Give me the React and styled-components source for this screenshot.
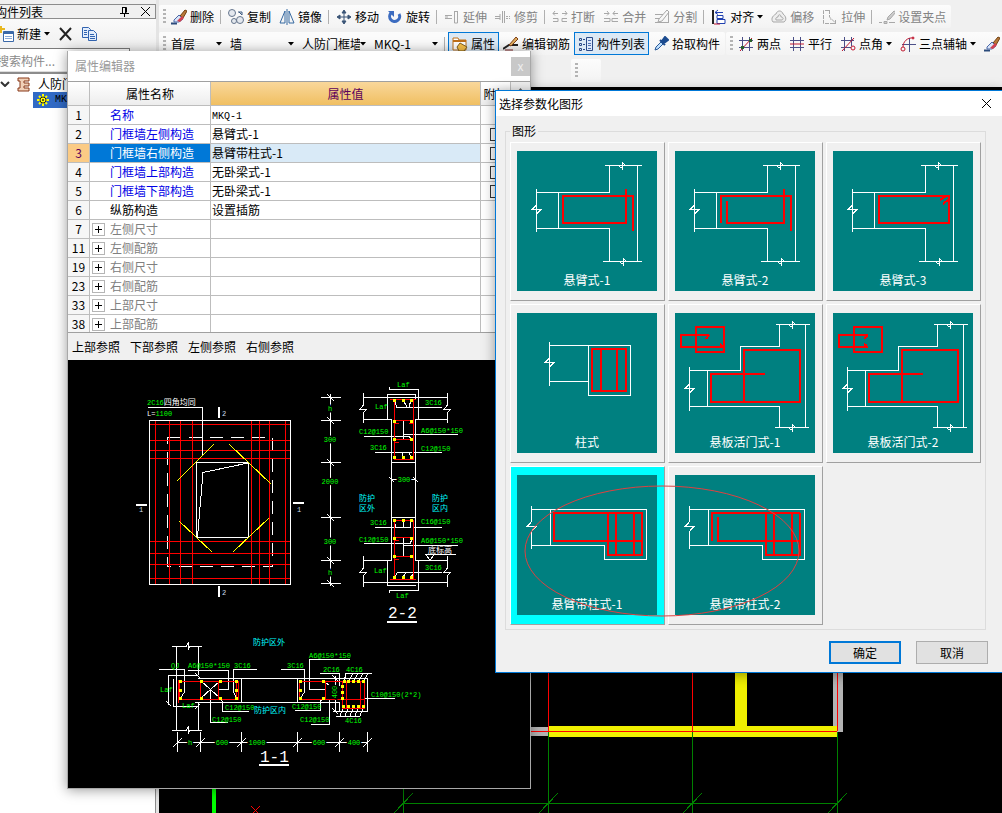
import { styled, createGlobalStyle } from "styled-components"

const GlobalStyle = createGlobalStyle`
    * {
        box-sizing: border-box;
    }
    body {
        margin: 0;
        font-family: "Noto Sans CJK SC", "Liberation Sans", sans-serif;
        font-size: 12px;
        line-height: 16px;
        color: #000;
        background: #f0f0f0;
    }
    button, input, select {
        font: inherit;
        color: inherit;
    }
    svg {
        display: block;
        flex: none;
    }
`

const Desktop = styled.div`
    position: relative;
    display: flex;
    height: 100vh;
    overflow: hidden;
`

/* ---------- left list ---------- */
const Sidebar = styled.aside`
    flex: none;
    width: 159px;
    display: flex;
    flex-direction: column;
    padding-top: 4px;
    border-right: 3px solid #e4e4e4;
    background: #f0f0f0;
`
const SideHeader = styled.header`
    display: flex;
    align-items: center;
    gap: 10px;
    height: 15px;
    margin-left: -8px;
    padding: 0 4px 0 2px;
    border: 1px solid #8c8c8c;
`
const SideTitle = styled.h2`
    flex: 1;
    margin: 0;
    font-size: 12px;
    font-weight: 400;
    line-height: 12px;
`
const FlatButton = styled.button`
    display: flex;
    align-items: center;
    gap: 3px;
    flex: none;
    padding: 0;
    border: 0;
    background: none;
    white-space: nowrap;
`
const SideTools = styled.div`
    display: flex;
    align-items: center;
    gap: 8px;
    height: 29px;
    margin-left: -2px;
    background: linear-gradient(#fafafa, #f0f0f0);
`
const Search = styled.input`
    width: 138px;
    height: 24px;
    margin-left: -8px;
    padding: 0 4px;
    border: 1px solid #7a7a7a;
    border-bottom-color: #ddd;
    background: #fff;
    &::placeholder {
        color: #8a8a8a;
        opacity: 1;
    }
`
const Tree = styled.ul`
    flex: 1;
    margin: 0;
    padding: 2px 0 0;
    list-style: none;
    border-top: 2px solid #8c8c8c;
    border-right: 1px solid #8c8c8c;
    background: #fff;
`
const TreeItem = styled.li`
    display: flex;
    align-items: center;
    gap: 6px;
    height: 16px;
    margin-left: ${props => props.$selected ? "33px" : "0"};
    padding-left: ${props => props.$selected ? "4px" : "0"};
    background: ${props => props.$selected ? "#316ac5" : "none"};
    white-space: nowrap;
`

/* ---------- toolbars ---------- */
const Main = styled.main`
    flex: 1;
    min-width: 0;
    display: flex;
    flex-direction: column;
`
const Ribbon = styled.div`
    display: flex;
    flex-direction: column;
    gap: 4px;
    height: 87px;
    padding-top: 5px;
    overflow: hidden;
    background: #f0f0f0;
`
const RibbonRow = styled.div`
    display: flex;
    flex: none;
    gap: 1px;
    height: 23px;
    padding-left: ${props => props.$indent || 0}px;
`
const Group = styled.div`
    display: flex;
    align-items: center;
    flex: none;
    padding: 0 1px 0 4px;
    min-width: 30px;
    border-radius: 2px;
    background: linear-gradient(#fcfcfc, #f3f3f3);
`
const Grip = styled.i`
    width: 3px;
    height: 15px;
    margin-right: 1px;
    background: repeating-linear-gradient(#b4b4b4 0 2px, transparent 2px 4px);
`
const Divider = styled.i`
    width: 1px;
    height: 14px;
    margin: 0 3px 0 2px;
    background: #b0b0b0;
`
const Tool = styled.button`
    display: flex;
    align-items: center;
    gap: 3px;
    flex: none;
    height: 23px;
    padding: 0 3px;
    border: 1px solid ${props => props.$on ? "#0078d7" : "transparent"};
    background: ${props => props.$on ? "#dce9f5" : "none"};
    color: ${props => props.disabled ? "#838383" : "#000"};
    white-space: nowrap;
`
const Combo = styled.label`
    display: flex;
    align-items: center;
    width: ${props => props.$width}px;
    height: 22px;
    padding: 0 4px;
    background: #fbfbfb;
`
const ComboSelect = styled.select`
    flex: 1;
    min-width: 0;
    padding: 0;
    border: 0;
    appearance: none;
    background: none;
`
const Canvas = styled.div`
    flex: 1;
    min-height: 0;
    background: #000;
    svg {
        width: 100%;
        height: 100%;
    }
`

/* ---------- property window ---------- */
const PropWindow = styled.section`
    position: absolute;
    left: 67px;
    top: 51px;
    width: 464px;
    display: flex;
    flex-direction: column;
    border: 1px solid #a8a8a8;
    border-top: 0;
    background: #f0f0f0;
    box-shadow: 0 1px 12px rgba(0, 0, 0, .4);
`
const PropTitle = styled.header`
    display: flex;
    align-items: center;
    justify-content: space-between;
    height: 31px;
    padding-left: 7px;
    border-bottom: 1px solid #a0a0a0;
    background: #fff;
    color: #999;
`
const PropClose = styled.button`
    width: 19px;
    height: 19px;
    padding: 0;
    border: 0;
    background: #c8c8c8;
    color: #eee;
    line-height: 14px;
`
const TableArea = styled.div`
    display: flex;
    height: 251px;
    overflow: hidden;
    border-bottom: 1px solid #a0a0a0;
`
const PropTable = styled.table`
    flex: 1;
    table-layout: fixed;
    border-collapse: separate;
    border-spacing: 0;
    background: #fff;
    th, td {
        height: 19px;
        padding: 0;
        border: solid #bdbdbd;
        border-width: 0 1px 1px 0;
        line-height: 14px;
        font-weight: 400;
        white-space: nowrap;
        overflow: hidden;
    }
    thead th {
        height: 24px;
        background: linear-gradient(#fff, #ededed);
    }
`
const ValueHead = styled.th`
    && {
        background: linear-gradient(#f9d79b, #f0bf61);
        color: #5b005b;
    }
`
const IndexCell = styled.th`
    background: ${props => props.$active ? "#fbcb85" : "#f6f6f6"};
    color: ${props => props.$active ? "#5b005b" : "#000"};
`
const NameCell = styled.td`
    background: ${props => props.$active ? "#0078d7" : "#fff"};
    color: ${props => props.$active ? "#fff" : props.$color};
`
const NameInner = styled.div`
    display: flex;
    align-items: center;
    gap: 5px;
    padding-left: ${props => props.$open ? 2 : 20}px;
`
const Expander = styled.button`
    display: grid;
    place-items: center;
    width: 13px;
    height: 13px;
    padding: 0;
    border: 1px solid #b5b5b5;
    background: #fff;
`
const ValueCell = styled.td`
    && {
        padding-left: 1px;
    }
    background: ${props => props.$active ? "#d9eaf7" : "#fff"};
`
const ExtraCell = styled.td`
    && {
        padding-left: 9px;
    }
`
const Check = styled.input`
    display: block;
    width: 13px;
    height: 13px;
    margin: 0;
    appearance: none;
    border: 1px solid #333;
    background: #fff;
`
const Mono = styled.span`
    font-family: "Liberation Mono", monospace;
    font-size: 10px;
`
const ScrollTrack = styled.div`
    width: 19px;
    padding-top: 6px;
    background: #f0f0f0;
    svg {
        margin: 0 auto;
    }
`
const RefBar = styled.nav`
    display: flex;
    align-items: center;
    gap: 10px;
    height: 27px;
    padding: 0 4px;
`
const Sheet = styled.div`
    height: 428px;
    padding-left: 1px;
    background: #000;
    font-family: "Liberation Mono", "Noto Sans CJK SC", monospace;
`

/* ---------- dialog ---------- */
const Dialog = styled.section`
    position: absolute;
    left: 495px;
    top: 90px;
    width: 508px;
    border: 1px solid #0078d7;
    background: #f0f0f0;
    box-shadow: 0 2px 12px rgba(0, 0, 0, .4);
`
const DialogTitle = styled.header`
    display: flex;
    align-items: center;
    justify-content: space-between;
    height: 25px;
    padding: 0 10px 0 3px;
    background: #fff;
`
const Shapes = styled.fieldset`
    margin: 7px 16px 0 9px;
    padding: 3px 4px 4px;
    border: 1px solid #dcdcdc;
`
const Legend = styled.legend`
    padding: 0 2px;
`
const ShapeGrid = styled.div`
    display: grid;
    grid-template-columns: repeat(3, 155px);
    gap: 3px;
`
const ShapeButton = styled.button`
    height: 159px;
    padding: 0 7px 1px 6px;
    border: 1px solid;
    border-color: #fff #a0a0a0 #a0a0a0 #fff;
    background: ${props => props.$selected ? "#00ffff" : "#f0f0f0"};
`
const ShapeFace = styled.span`
    display: flex;
    flex-direction: column;
    width: 140px;
    height: 140px;
    background: #008080;
    color: #fff;
    text-align: center;
`
const Actions = styled.footer`
    display: flex;
    justify-content: flex-end;
    gap: 15px;
    padding: 11px 14px 8px;
`
const ActionButton = styled.button`
    width: 72px;
    height: 23px;
    padding: 0;
    border: ${props => props.$main ? "2px solid #0078d7" : "1px solid #adadad"};
    background: #e1e1e1;
    line-height: 16px;
`
const Markup = styled.svg`
    position: absolute;
    left: 524px;
    top: 485px;
    pointer-events: none;
`

const Caret = () => (
    <svg width="6" height="4"><path d="M0 0h6l-3 3.5z" fill="#000" /></svg>
)

const B = "#3d5a80"
const G = "#a8a8a8"
const R = "#c01830"

const icons = {
    erase: <><path d="M0 14.5h6" stroke="#2a4a7a" strokeWidth="2" /><path d="M9 7l5-6 2 1-4 7z" fill="#b87838" stroke="#704010" /><path d="M3 11l5-5 4 4-4 3H3z" fill="#d8e4f8" stroke="#4a68a8" /><path d="M6 12l5-5 2 2-4 4z" fill="#d04050" /></>,
    copy: <><g fill="#e4e8ee" stroke="#65758c"><circle cx="4" cy="4" r="3.5" /><circle cx="6" cy="12" r="2.5" /><circle cx="12" cy="11" r="3.5" /></g><path d="M10 3h4v3M11 3l3 3" stroke={B} /></>,
    mirror: <path d="M6 2v12H1zM10 2v12h5zM8 0v16" stroke="#3568a0" fill="none" />,
    move: <path d="M8 2v12M2 8h12M8 1L6 4h4zM8 15l-2-3h4zM1 8l3-2v4zM15 8l-3-2v4z" stroke="#3b5577" fill="#3b5577" />,
    rotate: <><path d="M4 4a5 5 0 1 0 8 1" stroke="#3c6cc0" strokeWidth="3" /><path d="M1 2h6v6z" fill="#3c6cc0" /></>,
    extend: <path d="M1 6.5h7M1 9.5h7M1 8h3M13.500 2v12M10.500 2v12h3M10 2.500h4" stroke={G} />,
    trim: <path d="M0 7.500h5M0 9.500h5M11 7.500h2M14 7.500h1M11 9.500h2M14 9.500h1M7.500 2v12M9.500 2v12M5 5v6" stroke={G} />,
    split: <path d="M1 4.500h5M10 4.500h5M3 2L1 4.500l2 2M13 2l2 2.500-2 2M1 9.500h5v3H1M15 9.500h-5v3h5" stroke={G} />,
    merge: <path d="M1 4.500h5M10 4.500h5M4 2l2 2.500-2 2M12 2l-2 2.500 2 2M1 9.500h6v3H1M15 9.500H9v3h6" stroke={G} />,
    cut: <path d="M1 5.500h8M1 9.500h4M1 13.500h14M14.500 2v11M13 1L5 10l-1 3 4-1 7-9z" stroke={G} />,
    align: <><path d="M2 1v14" stroke="#222" strokeWidth="2" /><path d="M6 6.500h6v3H6zM6 10.500h8v4H6z" fill="#fff" stroke="#2040b0" /><path d="M4 3.500h8M7 1L4 3.500l3 2" stroke="#2040b0" /><path d="M3 15h6" stroke={R} /></>,
    offset: <path d="M2 13c-3-4 1-7 3-8 1-4 6-4 7 0 3 2 4 6 1 8zM5 11c-1-2 1-3 2-3 0-3 3-3 3 0 2 0 3 2 1 3z" stroke={G} fill="#eee" />,
    stretch: <path d="M7 1.500H1.500v13H10M7.500 1v7l6 6v-3M8 10h1M10 14.500h4" stroke={G} strokeDasharray="4 1" />,
    grip: <path d="M0 13.500h3M5 12.500h3v2H5zM10 13.500h6M15 2L9 8l-1 3 3-1 6-7z" stroke={G} fill="#ccc" />,
    props: <><path d="M1 2h5l1 2h7v10H1z" fill="#fff" stroke="#c07018" /><path d="M1 5h13" stroke="#c07018" strokeWidth="2" /><path d="M5 11l3-4 7 4-3 4H7z" fill="#f8c048" stroke="#806020" /></>,
    bars: <><path d="M0 13l6-4h9" stroke="#222" strokeWidth="2" /><path d="M6 9l7-8 2 2-7 7z" fill="#e0b060" stroke="#804018" /><path d="M2 14h8" stroke="#802020" /></>,
    list: <><path d="M1.500 2.500h2v2h-2zM1.500 7.500h2v2h-2zM1.500 12.500h2v2h-2z" stroke="#2a4a88" /><path d="M5 3.500h2M5 8.500h2M5 13.500h2" stroke="#2a4a88" /><path d="M8.500 1.500h6v13h-6z" fill="#dce8fa" stroke="#2a4a88" /><path d="M10 4.500h3M10 7.500h3M10 9.500h3M10 12.500h3" stroke="#5070b0" /></>,
    pick: <><path d="M2 14l1-3 5-5 2 2-5 5z" fill="#bfe0ff" stroke="#2a5a98" /><path d="M7 4l5 5M9 5l3-4 3 3-4 3z" fill="#1c4c90" stroke="#1c4c90" strokeWidth="2" /></>,
    twoPoint: <><path d="M4.500 1v14M11.500 1v14M1 4.500h14M1 11.500h14" stroke="#4c5088" /><path d="M2 15L14 2" stroke={R} /><path d="M11 3h3v3h-3zM3 10h3v3H3z" fill="#286028" /></>,
    parallel: <><path d="M4.500 1v14M11.500 1v14M1 4.500h14M1 11.500h14" stroke="#4c5088" /><path d="M1 8h14" stroke={R} /></>,
    angle: <><path d="M4.500 1v14M11.500 1v9M1 4.500h13M1 11.500h10" stroke="#4c5088" /><path d="M2 15L14 2" stroke={R} /><circle cx="13" cy="12" r="2" stroke={R} /></>,
    threePoint: <><path d="M9.500 2v14M2 8.500h14" stroke="#4c5088" /><path d="M14 2C7 1 3 6 3 11" stroke={R} /><circle cx="3" cy="13" r="2" stroke={R} /><circle cx="13" cy="2" r="1" stroke={R} /></>,
    add: <><path d="M5.500 5.500h10v10h-10z" fill="#fff" stroke="#3a68a8" /><path d="M5 7h11" stroke="#3a68a8" strokeWidth="2" /><path d="M7 10.500h7M7 12.500h7" stroke="#88a8d8" /><path d="M3 0v7M0 3h7" stroke="#e8b820" strokeWidth="2" /></>,
    remove: <path d="M2 2l11 12M13 2L2 14" stroke="#222" strokeWidth="2" />,
    pages: <g fill="#e4eefc" stroke="#3264b0"><path d="M.5 1.500h6l2 2v8h-8z" /><path d="M6.500 4.500h5l3 3v7h-8z" /><path d="M8 8.500h4M8 10.500h5M8 12.500h5M2 4.500h3M2 6.500h3M2 8.500h3" /></g>,
    wall: <path d="M2 2h11v3H8v2h5v3H8v2h5v3H2v-3h2V5H2z" fill="#f0d0b8" stroke="#883818" />,
    gear: <><path d="M6 0v12M0 6h12M2 2l8 8M10 2l-8 8" stroke="#ff0" strokeWidth="2" /><circle cx="6" cy="6" r="3" fill="#ff0" stroke="#222" /><circle cx="6" cy="6" r="1" fill="#222" /></>,
    pin: <path d="M3.500 1.500h4v5M3.500 1v6M6.500 1v6M1 7.500h9M5.500 7v4" stroke="#000" />,
    close: <path d="M1 1l9 9M10 1l-9 9" stroke="#000" />,
}

const Icon = ({ name, size = 16 }) => (
    <svg width={size} height={size} fill="none">{icons[name]}</svg>
)

const editTools = [
    ["erase", "删除"], null,
    ["copy", "复制"], ["mirror", "镜像"], null,
    ["move", "移动"], ["rotate", "旋转"], null,
    ["extend", "延伸", true], ["trim", "修剪", true], null,
    ["split", "打断", true], ["merge", "合并", true], ["cut", "分割", true], null,
    ["align", "对齐", false, true], ["offset", "偏移", true], ["stretch", "拉伸", true], null,
    ["grip", "设置夹点", true],
]

const combos = [
    ["楼层", "首层", 59],
    ["类别", "墙", 72],
    ["构件类型", "人防门框墙", 72],
    ["构件", "MKQ-1", 72],
]

const Toolbars = () => (
    <Ribbon>
        <RibbonRow>
            <Group>
                <Grip />
                {editTools.map((t, i) => t ? (
                    <Tool key={i} disabled={t[2]}>
                        <Icon name={t[0]} />{t[1]}{t[3] && <Caret />}
                    </Tool>
                ) : <Divider key={i} />)}
            </Group>
        </RibbonRow>
        <RibbonRow>
            <Group>
                <Grip />
                {combos.map(([label, value, width]) => (
                    <Combo key={label} $width={width}>
                        <ComboSelect aria-label={label}>
                            <option>{value}</option>
                        </ComboSelect>
                        <Caret />
                    </Combo>
                ))}
                <Divider />
                <Tool $on><Icon name="props" />属性</Tool>
                <Tool><Icon name="bars" />编辑钢筋</Tool>
                <Tool $on><Icon name="list" />构件列表</Tool>
                <Tool><Icon name="pick" />拾取构件</Tool>
            </Group>
            <Group>
                <Grip />
                <Tool><Icon name="twoPoint" />两点</Tool>
                <Tool><Icon name="parallel" />平行</Tool>
                <Tool><Icon name="angle" />点角 <Caret /></Tool>
                <Tool><Icon name="threePoint" />三点辅轴 <Caret /></Tool>
                <Tool aria-label="删除辅轴"><Icon name="erase" /></Tool>
            </Group>
        </RibbonRow>
        <RibbonRow $indent={412}>
            <Group><Grip /></Group>
        </RibbonRow>
    </Ribbon>
)

const ModelView = () => (
    <Canvas>
        <svg shapeRendering="crispEdges" fill="none">
            <g transform="translate(-159 -87)">
                <path d="M833 600h10v132h-10zM531 727h17v9h-17z" fill="#b4b4b4" />
                <path d="M735 600h12v126h-12zM548 726h289v11H548z" fill="#f0f000" />
                <path d="M531 731.5h306M548.5 600v131M692.5 600v131M837.5 600v131" stroke="#f00" />
                <path d="M548.5 732v81M692.5 732v81M837.5 732v81M403.5 780v33M403 803.5h435" stroke="#008000" />
                <path d="M394 813l19-20M539 813l19-20M683 813l19-20M828 813l19-20" stroke="#008000" />
                <path d="M212 780h4v33h-4z" fill="#0f0" />
                <path d="M251 806l9 9M260 806l-9 9" stroke="#f00" />
            </g>
        </svg>
    </Canvas>
)

const rows = [
    [1, "名称", <Mono>MKQ-1</Mono>, "#0000e6"],
    [2, "门框墙左侧构造", "悬臂式-1", "#0000e6", true],
    [3, "门框墙右侧构造", "悬臂带柱式-1", "#0000e6", true],
    [4, "门框墙上部构造", "无卧梁式-1", "#0000e6", true],
    [5, "门框墙下部构造", "无卧梁式-1", "#0000e6", true],
    [6, "纵筋构造", "设置插筋", "#000"],
    [7, "左侧尺寸"],
    [11, "左侧配筋"],
    [19, "右侧尺寸"],
    [23, "右侧配筋"],
    [33, "上部尺寸"],
    [38, "上部配筋"],
]

const Properties = () => (
    <TableArea>
        <PropTable>
            <colgroup>
                <col width="22" />
                <col width="121" />
                <col width="270" />
                <col width="30" />
            </colgroup>
            <thead>
                <tr>
                    <th />
                    <th>属性名称</th>
                    <ValueHead>属性值</ValueHead>
                    <th>附加</th>
                </tr>
            </thead>
            <tbody>
                {rows.map(([no, name, value, color, check]) => (
                    <tr key={no}>
                        <IndexCell $active={no === 3}>{no}</IndexCell>
                        <NameCell $active={no === 3} $color={color || "#808080"}>
                            <NameInner $open={!color}>
                                {!color && (
                                    <Expander aria-label={"展开" + name}>
                                        <svg width="7" height="7"><path d="M0 3.5h7M3.5 0v7" stroke="#000" /></svg>
                                    </Expander>
                                )}
                                {name}
                            </NameInner>
                        </NameCell>
                        <ValueCell $active={no === 3}>{value}</ValueCell>
                        <ExtraCell>{check && <Check type="checkbox" aria-label={name + "附加"} />}</ExtraCell>
                    </tr>
                ))}
            </tbody>
        </PropTable>
        <ScrollTrack>
            <svg width="7" height="4"><path d="M0 4l3.5-4L7 4z" fill="#606060" /></svg>
        </ScrollTrack>
    </TableArea>
)

/* ---------- reinforcement sheet ---------- */
const T = ({ x, y, c = "#00ff00", s = 7, mid, children }) => (
    <text x={x} y={y} fill={c} stroke={mid ? "#000" : "none"} strokeWidth={mid ? 3 : 0}
        paintOrder="stroke" fontSize={s} textAnchor={mid ? "middle" : "start"}>{children}</text>
)

const Dots = ({ at }) => at.map(([x, y]) => (
    <rect key={x + "-" + y} x={x - 1} y={y - 1} width="3" height="3" fill="#ff0" />
))

const Elevation = () => (
    <g transform="translate(61 15)">
        <rect x="37.5" y="62.5" width="105" height="129" stroke="#fff" strokeDasharray="13 8" />
        <path stroke="#f00" d="M25.5 46v163M39.5 46v163M50.5 46v163M62.5 46v163M121.5 46v163M129.5 46v163M139.5 46v163M155.5 46v163M20 49.5h141M20 65.5h141M20 75.5h141M20 83.5h141M20 166.5h141M20 178.5h141M20 189.5h141M20 203.5h141" />
        <path stroke="#fff" d="M19.5 45.5h141v164h-141zM66.5 87.5h52v75h-52zM118 88L73 97.5 67.5 162M18 32.5h54.5V80" />
        <path stroke="#ff0" d="M47 106l37-37M99 69l42 40M49 146l33 31M103 177l36-34" />
        <path stroke="#fff" strokeWidth="2" d="M89 32v11M89 211v11M6 130h11M163 128h11" />
        <T x="17" y="30">2C16<tspan fill="#fff" fontSize="8">四角均同</tspan></T>
        <T x="17" y="41"><tspan fill="#fff">L=</tspan>1100</T>
        <T x="92" y="41" c="#cde">2</T>
        <T x="92" y="220" c="#cde">2</T>
        <T x="9" y="137" c="#cde">1</T>
        <T x="167" y="137" c="#cde">1</T>
    </g>
)

const SectionTwo = () => (
    <g transform="translate(241 15)">
        <path stroke="#fff" d="M20.5 19v192M11 22.5h20M11 45.5h20M11 87.5h20M11 142.5h20M11 185.5h20M11 208.5h20M17 19l7 7M17 42l7 7M17 84l7 7M17 139l7 7M17 182l7 7M17 205l7 7" />
        <path stroke="#fff" d="M53 22.5h85M53 44.5h29M106 44.5h32M53.5 18v12l-3 4h6l-3 4v10M137.5 18v12l-3 4h6l-3 4v10M81.5 44v142M105.5 44v142M82 87.5h24M82 142.5h24M53 185.5h29M106 185.5h32M53 207.5h85M53.5 181v12l-3 4h6l-3 4v11M137.5 181v12l-3 4h6l-3 4v11" />
        <path stroke="#fff" d="M79.5 12v2.5h29v30M77.5 44.5v-25h28v4M77.5 185v25.5h28M79.5 218v-2.5h29v-30M82 104.5h24M79 102l5 5M103 102l5 5" />
        <path stroke="#fff" d="M84 25l3 7.500h45M93 25l4 7M101 25l-2 7M54 61.500h45l3 3M93.5 45v20M93 59.500h55M65 77.500h37M84 82v-4M93 82l-1-4M101 82l-2-4M103 77.500h29M65 152.500h36M84 145l2 7M93 145v7M101 145l-1 7M103 152.500h29M54 168.500h46l2-4M93.500 163v18M93 170.500h55M87 197.500h45M85 202l2-4M93 202l3-4M101 202l3-4M115 179.500h31M116 180l4 5 4-5" />
        <path stroke="#f00" d="M80 24.5h26M84.5 24v61M103.5 24v61M84 84.5h20M84 45.5h20M84 64.5h20M84.5 48h4M99 48h4M84.5 67h4M84.5 145v60M103.5 145v60M84 145.5h20M84 162.5h20M84 181.5h20M80 204.5h26M84.5 165h4M84.5 184h4" />
        <Dots at={[[84, 25], [93, 25], [101, 25], [84, 46], [101, 46], [84, 64], [101, 64], [84, 82], [93, 82], [101, 82], [84, 145], [93, 145], [101, 145], [84, 163], [101, 163], [84, 181], [101, 181], [84, 202], [93, 202], [101, 202]]} />
        <T x="20" y="36" mid>h</T>
        <T x="20" y="67" mid>300</T>
        <T x="20" y="109" mid>2000</T>
        <T x="20" y="169" mid>300</T>
        <T x="20" y="200" mid>h</T>
        <T x="94" y="107" mid>300</T>
        <T x="87" y="12">Laf</T>
        <T x="65" y="34">Laf</T>
        <T x="115" y="30">3C16</T>
        <T x="49" y="59">C12@150</T>
        <T x="111" y="58">A6@150*150</T>
        <T x="60" y="75">3C16</T>
        <T x="111" y="76">C12@150</T>
        <T x="60" y="150">3C16</T>
        <T x="111" y="149">C16@150</T>
        <T x="49" y="167">C12@150</T>
        <T x="111" y="168">A6@150*150</T>
        <T x="118" y="178" c="#fff" s={8}>底标高</T>
        <T x="64" y="198">Laf</T>
        <T x="115" y="195">3C16</T>
        <T x="86" y="223">Laf</T>
        <T x="49" y="126" c="#0ff" s={8}>防护</T>
        <T x="49" y="136" c="#0ff" s={8}>区外</T>
        <T x="122" y="126" c="#0ff" s={8}>防护</T>
        <T x="122" y="136" c="#0ff" s={8}>区内</T>
        <T x="78" y="243" c="#fff" s={16}>2-2</T>
        <path stroke="#fff" strokeWidth="2" d="M77 247h30" />
    </g>
)

const SectionOne = () => (
    <g transform="translate(81 270)">
        <path stroke="#fff" d="M26.5 16v85M48.500 16v29M48.500 72v29M22 16.500h14l2-3v6l2-3h12M22 100.500h14l2-3v6l2-3h12M45 43l5 5M45 79l5-5" />
        <path stroke="#fff" d="M48 48.500h169.500v33H183M45 72.500h144.500v9M91.500 48v24M147.500 48v24M18.500 75V45.500H48M16 71l5 5M48 76.500H23.500v-28M51 51l19 17M70 51L51 68M185.500 46v36M182 45l6 6M182 78l6 6" />
        <path stroke="#fff" d="M9 39.500h25.500V62l-4 6M38 40.500h40.500v19H69M107 39.500H83.500V62l3 6M131 39.500h23.500V62l-4 6M200 29.500h-40.500v30H175M170 43.500h19.500V56M222 43.500h-26l-2 8M203 43l-4 8M208 43l-4 8M213 43l-4 8M218 43l-4 8M245 68.500h-30M186 86.500h24M193 78l-3 8M198 78l-3 8M203 78l-3 8M208 78l-3 8M213 78l-3 8M70 68l2.500 4v9.500H99M60.500 60v32.500H78M145 80.500h25.500V71l3-3M161 94.500h18.500V70M173 51l6 4" />
        <path stroke="#f00" d="M29.500 51.500h59v18h-59zM28.500 50v23M50.500 51v18M68.500 51v18M86.500 51v18M149.500 69.500V51.500h65.500M149 69.500h66M175.500 51v18M192.500 51.500h22v27h-22zM196.500 51v27M210.500 51v27" />
        <Dots at={[[30, 51], [30, 60], [30, 68], [51, 51], [51, 68], [70, 51], [70, 68], [86, 51], [86, 60], [86, 68], [150, 51], [150, 60], [150, 68], [173, 51], [173, 68], [192, 56], [192, 62], [192, 68], [194, 51], [198, 51], [203, 51], [208, 51], [213, 51], [193, 76], [198, 76], [203, 76], [208, 76], [213, 76]]} />
        <path stroke="#fff" d="M27 112.500h191M27.500 102v20M50.500 102v20M91.500 102v20M147.500 102v20M189.500 102v20M217.500 102v20M23 117l9-9M46 117l9-9M87 117l9-9M143 117l9-9M185 117l9-9M213 117l9-9" />
        <T x="40" y="115" mid>h</T>
        <T x="72" y="115" mid>600</T>
        <T x="107" y="115" mid>1000</T>
        <T x="169" y="115" mid>600</T>
        <T x="204" y="115" mid>400</T>
        <T x="103" y="15" c="#0ff" s={8}>防护区外</T>
        <T x="104" y="83" c="#0ff" s={8}>防护区内</T>
        <T x="21" y="38">QJ</T>
        <T x="38" y="38">A6@150*150</T>
        <T x="84" y="38">3C16</T>
        <T x="137" y="38">3C16</T>
        <T x="159" y="28">A6@150*150</T>
        <T x="173" y="42">2C16</T>
        <T x="196" y="42">4C16</T>
        <T x="221" y="67">C10@150(2*2)</T>
        <T x="195" y="93">4C16</T>
        <T x="75" y="80">C12@150</T>
        <T x="62" y="92">C12@150</T>
        <T x="142" y="79">C12@150</T>
        <T x="150" y="92">C12@150</T>
        <T x="10" y="62">Laf</T>
        <T x="32" y="78">Laf</T>
        <g transform="translate(187 62) rotate(-90)"><T x="0" y="0" mid>400</T></g>
        <T x="110" y="132" c="#fff" s={16}>1-1</T>
        <path stroke="#fff" strokeWidth="2" d="M109 135h30" />
    </g>
)

/* ---------- shape thumbnails ---------- */
const sideBreak = (x, y) => `M${x - 1} ${y - 4}l-4 4h9l-4 4`
const topBreak = (x, y) => `M${x - 3} ${y + 1}l3 2v-6l3 3M${x} ${y - 4}v8`

const wallT = "M19.5 38v43M19.5 41.5h73v-27M19.5 77.5h73v33M41.5 41.5v36M88 14.5h37M86 110.5h39M120.5 14.5v96" + sideBreak(20, 58.5) + topBreak(105.5, 14.5) + topBreak(106.5, 110.5)
const wallStep = "M14.5 54v44M14.5 57.5h51v-24h39v-22M14.5 93.5h90v21M32.5 57.5v36M101 11.5h34M100 114.5h34M130.5 11.5v103" + sideBreak(15, 75.5) + topBreak(117.5, 11.5) + topBreak(117.5, 114.5)
const wallColumn = "M14.5 31v16M14.5 56v18M14.5 34.5h115v50h-42v-14h-73M33.5 34.5v36" + sideBreak(15, 51.5)
const column = "M32.5 29v44M32.5 32.5h81v50h-42v-50M32.5 68.5h39" + sideBreak(33, 49.5)
const stepBars = "M69 37h56v52H69zM90 61H36v28h33M21 14h28v25H21z"
const columnBars = "M91 38v42h34V38M99 38v42M117 38v42"

const shapes = [
    ["悬臂式-1", wallT, "M109 38v34H46V45h70v35"],
    ["悬臂式-2", wallT, "M46 72V45h70v35M52 50v22h57V38"],
    ["悬臂式-3", wallT, "M46 45h70v27H46zM107 49l6-4M110 53l6-5"],
    ["柱式", column, "M75 36h34v42H75zM84 36v42M100 36v42"],
    ["悬板活门式-1", wallStep, stepBars + "M34 22H6v12h43M34 22l-3 4M49 34l-4-3"],
    ["悬板活门式-2", wallStep, stepBars + "M35 22H6v12h29M34 23l-3 3M34 33l-3-2"],
    ["悬臂带柱式-1", wallColumn, "M37 38h88v28H37z" + columnBars],
    ["悬臂带柱式-2", wallColumn, "M37 66V38h88M43 42v24h82" + columnBars],
]

const App = () => {
    return (
        <Desktop>
            <GlobalStyle />
            <Sidebar>
                <SideHeader>
                    <SideTitle>构件列表</SideTitle>
                    <FlatButton aria-label="固定"><Icon name="pin" size={11} /></FlatButton>
                    <FlatButton aria-label="关闭列表"><Icon name="close" size={11} /></FlatButton>
                </SideHeader>
                <SideTools>
                    <FlatButton><Icon name="add" />新建 <Caret /></FlatButton>
                    <FlatButton aria-label="删除构件"><Icon name="remove" /></FlatButton>
                    <FlatButton aria-label="复制构件"><Icon name="pages" /></FlatButton>
                </SideTools>
                <Search aria-label="搜索构件" placeholder="搜索构件..." />
                <Tree>
                    <TreeItem>
                        <svg width="10" height="6" fill="none"><path d="M1 1l4 4 4-4" stroke="#333" strokeWidth="2" /></svg>
                        <Icon name="wall" />
                        人防门框墙
                    </TreeItem>
                    <TreeItem $selected>
                        <Icon name="gear" size={12} />
                        <Mono>MKQ-1</Mono>
                    </TreeItem>
                </Tree>
            </Sidebar>
            <Main>
                <Toolbars />
                <ModelView />
            </Main>

            <PropWindow>
                <PropTitle>
                    属性编辑器
                    <PropClose aria-label="关闭">x</PropClose>
                </PropTitle>
                <Properties />
                <RefBar>
                    <FlatButton>上部参照</FlatButton>
                    <FlatButton>下部参照</FlatButton>
                    <FlatButton>左侧参照</FlatButton>
                    <FlatButton>右侧参照</FlatButton>
                </RefBar>
                <Sheet>
                    <svg width="461" height="428" fill="none" shapeRendering="crispEdges">
                        <Elevation />
                        <SectionTwo />
                        <SectionOne />
                    </svg>
                </Sheet>
            </PropWindow>

            <Dialog role="dialog" aria-label="选择参数化图形">
                <DialogTitle>
                    选择参数化图形
                    <FlatButton aria-label="关闭对话框"><Icon name="close" size={11} /></FlatButton>
                </DialogTitle>
                <Shapes>
                    <Legend>图形</Legend>
                    <ShapeGrid>
                        {shapes.map(([name, outline, bars]) => (
                            <ShapeButton key={name} $selected={name === "悬臂带柱式-1"}>
                                <ShapeFace>
                                    <svg width="140" height="121" fill="none" shapeRendering="crispEdges">
                                        <path d={outline} stroke="#fff" />
                                        <path d={bars} stroke="#f00" strokeWidth="2" strokeLinejoin="round" />
                                    </svg>
                                    {name}
                                </ShapeFace>
                            </ShapeButton>
                        ))}
                    </ShapeGrid>
                </Shapes>
                <Actions>
                    <ActionButton $main>确定</ActionButton>
                    <ActionButton>取消</ActionButton>
                </Actions>
            </Dialog>
            <Markup width="276" height="133" fill="none">
                <ellipse cx="138" cy="66" rx="137" ry="65" stroke="#e04040" />
            </Markup>
        </Desktop>
    )
}

export default App
